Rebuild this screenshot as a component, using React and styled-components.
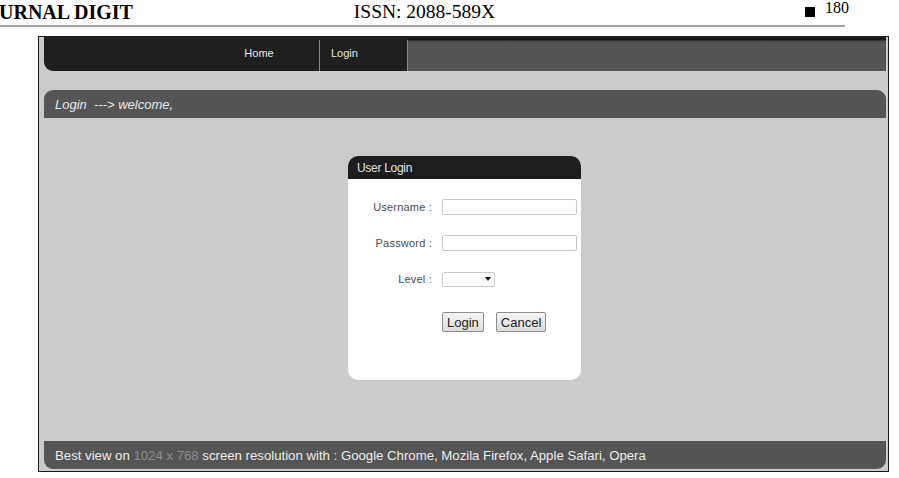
import React from "react";
import styled, { createGlobalStyle } from "styled-components";

const Global = createGlobalStyle`
  html, body { margin: 0; padding: 0; background: #fff; }
  body { width: 899px; height: 478px; overflow: hidden; }
`;

export default function App() {
  return (
    <>
      <Global />
      <Page>
        <Running>
          <Journal>URNAL DIGIT</Journal>
          <Issn>ISSN: 2088-589X</Issn>
          <PageNo>
            <Square />
            <Num>180</Num>
          </PageNo>
        </Running>
        <Rule />

        <Frame>
          <Nav>
            <NavDark>
              <NavSpacer />
              <NavItem $w={120} $center>Home</NavItem>
              <NavSep />
              <NavItem $w={87}>Login</NavItem>
              <NavSep />
            </NavDark>
            <NavRest />
          </Nav>

          <Crumb>Login&nbsp; ---&gt; welcome,</Crumb>

          <Stage>
            <Box>
              <BoxHead>User Login</BoxHead>
              <BoxBody>
                <Row>
                  <Label>Username :</Label>
                  <Field type="text" />
                </Row>
                <Row>
                  <Label>Password :</Label>
                  <Field type="password" />
                </Row>
                <Row>
                  <Label>Level :</Label>
                  <Select>
                    <Caret />
                  </Select>
                </Row>
                <Row>
                  <Label />
                  <Buttons>
                    <Btn>Login</Btn>
                    <Btn>Cancel</Btn>
                  </Buttons>
                </Row>
              </BoxBody>
            </Box>
          </Stage>

          <Footer>
            Best view on <Dim>1024 x 768</Dim> screen resolution with : Google
            Chrome, Mozila Firefox, Apple Safari, Opera
          </Footer>
        </Frame>
      </Page>
    </>
  );
}

const Page = styled.div`
  width: 899px;
  height: 478px;
`;

const Running = styled.div`
  display: grid;
  grid-template-columns: 1fr auto 1fr;
  align-items: end;
  width: 847px;
  height: 22px;
  font-family: "Liberation Serif", "Times New Roman", serif;
  color: #000;
`;

const Journal = styled.div`
  font-size: 20px;
  font-weight: bold;
  line-height: 20px;
  margin-left: -1px;
`;

const Issn = styled.div`
  font-size: 19.5px;
  line-height: 20px;
  margin-left: 2px;
`;

const PageNo = styled.div`
  justify-self: end;
  display: flex;
  align-items: flex-start;
  gap: 10px;
  align-self: start;
  margin-right: -2px;
`;

const Square = styled.span`
  width: 10px;
  height: 10px;
  margin-top: 7px;
  background: #000;
`;

const Num = styled.span`
  font-size: 16px;
  line-height: 16px;
`;

const Rule = styled.div`
  width: 845px;
  height: 2px;
  margin-top: 3px;
  background: #a3a3a3;
`;

const Frame = styled.div`
  margin: 9px 0 0 38px;
  width: 851px;
  height: 436px;
  padding: 0 2px 2px 5px;
  box-sizing: border-box;
  border: 1px solid #1a1a1a;
  border-top-color: #222;
  background: #cbcbcb;
  display: flex;
  flex-direction: column;
  font-family: "Liberation Sans", Arial, sans-serif;
`;

const Nav = styled.div`
  display: flex;
  height: 34px;
`;

const NavDark = styled.div`
  display: flex;
  background: #1f1f1f;
  border-bottom-left-radius: 9px;
`;

const NavSpacer = styled.div`
  width: 155px;
`;

const NavItem = styled.div`
  width: ${({ $w }) => $w}px;
  display: flex;
  align-items: center;
  justify-content: ${({ $center }) => ($center ? "center" : "flex-start")};
  padding-left: ${({ $center }) => ($center ? 0 : 11)}px;
  padding-bottom: 2px;
  box-sizing: border-box;
  color: #e6e6e6;
  font-size: 11px;
`;

const NavSep = styled.div`
  width: 1px;
  margin-top: 3px;
  background: #8a8a8a;
`;

const NavRest = styled.div`
  flex: 1;
  background: linear-gradient(#1a1a1a 0, #1a1a1a 3px, #4a4a4a 4px, #555 8px, #555);
`;

const Crumb = styled.div`
  margin-top: 19px;
  height: 28px;
  display: flex;
  align-items: center;
  padding-left: 11px;
  background: #555;
  border-radius: 9px 9px 0 0;
  color: #e8e8e8;
  font-size: 13px;
  font-style: italic;
`;

const Stage = styled.div`
  flex: 1;
  display: flex;
  justify-content: center;
  padding-top: 38px;
`;

const Box = styled.div`
  width: 233px;
  height: 224px;
  margin-left: -1px;
  display: flex;
  flex-direction: column;
  border-radius: 10px;
  overflow: hidden;
  background: #fff;
`;

const BoxHead = styled.div`
  height: 23px;
  display: flex;
  align-items: center;
  padding-left: 9px;
  background: #1e1e1e;
  color: #e0e0e0;
  font-size: 12px;
  letter-spacing: -0.3px;
`;

const BoxBody = styled.div`
  display: flex;
  flex-direction: column;
  gap: 20px;
  padding-top: 20px;
`;

const Row = styled.div`
  display: flex;
  align-items: center;
  gap: 10px;
  min-height: 16px;
`;

const Label = styled.div`
  width: 84px;
  text-align: right;
  color: #4d4d4d;
  font-size: 11px;
  letter-spacing: 0.2px;
`;

const Field = styled.input`
  width: 135px;
  height: 16px;
  box-sizing: border-box;
  border: 1px solid #c8c8c8;
  border-radius: 2px;
  background: #fff;
  padding: 0;
  outline: none;
`;

const Select = styled.div`
  width: 53px;
  height: 15px;
  box-sizing: border-box;
  border: 1px solid #c8c8c8;
  border-radius: 2px;
  display: flex;
  align-items: center;
  justify-content: flex-end;
  padding-right: 3px;
`;

const Caret = styled.span`
  width: 0;
  height: 0;
  border-left: 3.5px solid transparent;
  border-right: 3.5px solid transparent;
  border-top: 4px solid #111;
`;

const Buttons = styled.div`
  display: flex;
  gap: 12px;
  margin-top: 5px;
`;

const Btn = styled.button`
  height: 20px;
  padding: 0 4px;
  font-family: "Liberation Sans", Arial, sans-serif;
  font-size: 13px;
  color: #222;
  background: linear-gradient(#f6f6f6, #dcdcdc);
  border: 1px solid #8c8c8c;
  border-radius: 2px;
`;

const Footer = styled.div`
  height: 28px;
  display: flex;
  align-items: center;
  padding-left: 11px;
  background: #555;
  border-radius: 0 0 9px 9px;
  color: #ececec;
  font-size: 13.2px;
  white-space: pre;
`;

const Dim = styled.span`
  color: #8e8e8e;
`;
